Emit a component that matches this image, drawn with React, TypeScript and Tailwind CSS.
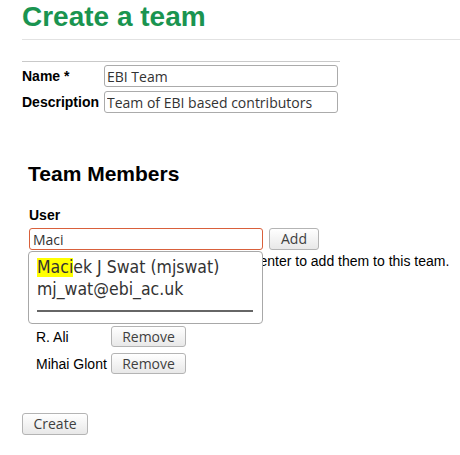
const ctl = "font-['Open_Sans',sans-serif]";

function Btn({ label, w, h }: { label: string; w: string; h: string }) {
    return (
        <button
            className={`${ctl} ${w} ${h} flex items-center justify-center rounded-[3px] border border-[#b4b4b4] bg-gradient-to-b from-white to-[#e8e8e8] text-[14px] leading-none text-[#3f3f3f]`}
        >
            {label}
        </button>
    );
}

function Field({ value, focus }: { value: string; focus?: boolean }) {
    return (
        <input
            readOnly
            value={value}
            className={`${ctl} h-[22px] w-[234px] rounded-[3px] border bg-white px-[2px] text-[14px] text-[#333] outline-none ${
                focus ? "border-[#d9603b] pl-[3px]" : "border-[#ababab]"
            }`}
        />
    );
}

const members = ["R. Ali", "Mihai Glont"];

export default function App() {
    return (
        <div className="min-h-screen bg-white pl-[22px] font-['Liberation_Sans',Arial,sans-serif] text-black">
            <h1 className="text-[28px] font-bold leading-[34px] text-[#1a9450]">
                Create a team
            </h1>
            <div className="mt-[5px] border-t border-[#e2e2e2]" />

            <div className="mt-[21px] w-[318px] border-t border-[#c9c9c9]" />
            <div className="mt-[3px] grid grid-cols-[82px_234px] items-center gap-y-[4px]">
                <label className="text-[14px] font-bold leading-4">Name *</label>
                <Field value="EBI Team" />
                <label className="text-[14px] font-bold leading-4">Description</label>
                <Field value="Team of EBI based contributors" />
            </div>

            <div className="mt-[48px] pl-[6px]">
                <h2 className="text-[21px] font-bold leading-[26px]">Team Members</h2>
                <p className="mt-[20px] pl-px text-[14px] font-bold leading-4">User</p>

                <div className="relative mt-[5px]">
                    <div className="flex gap-[6px] pl-px">
                        <Field value="Maci" focus />
                        <Btn label="Add" w="w-[50px]" h="h-[22px]" />
                    </div>
                    <p className="mt-[3px] text-[14px] leading-4">
                        Start typing a user's name and press enter to add them to this team.
                    </p>

                    <div className="mt-[57px] flex flex-col gap-[6px] pl-[8px]">
                        {members.map((m) => (
                            <div key={m} className="grid grid-cols-[75px_auto] items-center">
                                <span className="text-[14px] leading-4">{m}</span>
                                <Btn label="Remove" w="w-[75px]" h="h-[21px]" />
                            </div>
                        ))}
                    </div>

                    <div className="absolute left-0 top-[23px] w-[235px] rounded-[4px] border border-[#a8a8a8] bg-white px-[8px] pb-[11px] pt-[6px] font-['DejaVu_Sans_Condensed','DejaVu_Sans',sans-serif] text-[17.5px] text-[#333]">
                        <div className="leading-[19px]">
                            <span className="inline-block bg-[#ffff00]">Maci</span>ek J Swat (mjswat)
                        </div>
                        <div className="mt-[3px] leading-[19px]">mj_wat@ebi_ac.uk</div>
                        <div className="mt-[11px] mr-px h-[2px] bg-[#666]" />
                    </div>
                </div>
            </div>

            <div className="mt-[39px]">
                <Btn label="Create" w="w-[66px]" h="h-[22px]" />
            </div>
        </div>
    );
}
